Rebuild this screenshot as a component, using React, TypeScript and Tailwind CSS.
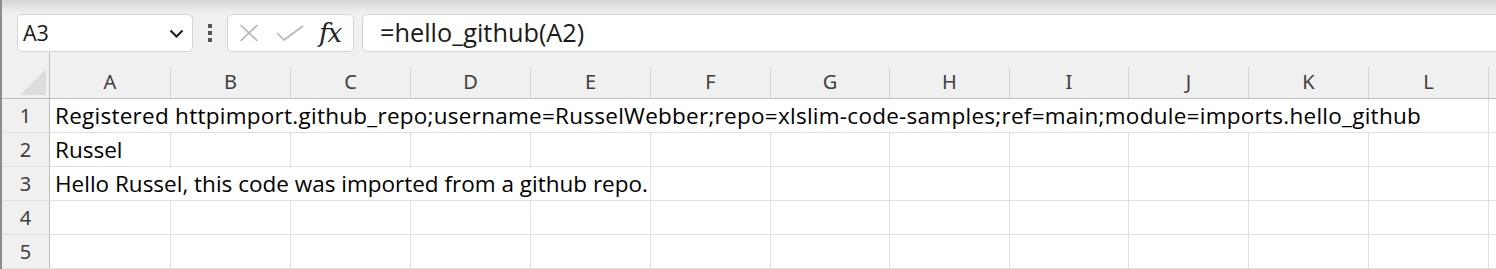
const COLS = [
  { name: "A", w: "w-[121px]" },
  { name: "B", w: "w-[120px]" },
  { name: "C", w: "w-[120px]" },
  { name: "D", w: "w-[120px]" },
  { name: "E", w: "w-[120px]" },
  { name: "F", w: "w-[120px]" },
  { name: "G", w: "w-[119px]" },
  { name: "H", w: "w-[120px]" },
  { name: "I", w: "w-[119px]" },
  { name: "J", w: "w-[120px]" },
  { name: "K", w: "w-[120px]" },
  { name: "L", w: "w-[120px]" },
];

const SPAN_W: Record<number, string> = {
  5: "w-[601px]",
  12: "w-[1439px]",
};

type Row = { n: number; text?: string; span?: number; track?: string };

const ROWS: Row[] = [
  {
    n: 1,
    text: "Registered httpimport.github_repo;username=RusselWebber;repo=xlslim-code-samples;ref=main;module=imports.hello_github",
    span: 12,
    track: "tracking-[0.26px]",
  },
  { n: 2, text: "Russel" },
  { n: 3, text: "Hello Russel, this code was imported from a github repo.", span: 5 },
  { n: 4 },
  { n: 5 },
];

const cellFont = "font-['Open_Sans','Noto_Sans',sans-serif] text-[22.5px] leading-none text-black";
const uiFont = "font-['Noto_Sans','Open_Sans',sans-serif] text-[20px] leading-none text-[#3e3e3e]";

function FormulaBar() {
  return (
    <div className="flex h-[40px] items-center pl-[15px]">
      <div className="flex h-[38px] w-[176px] items-center justify-between rounded-[5px] border border-[#d4d4d4] bg-white pl-[5px] pr-[8px]">
        <span className="font-['Open_Sans','Noto_Sans',sans-serif] text-[21.5px] leading-none text-[#1a1a1a]">
          A3
        </span>
        <svg width="15" height="9" viewBox="0 0 15 9">
          <path d="M1.5 1.5 7.5 7.5l6-6" fill="none" stroke="#222" strokeWidth="2.2" />
        </svg>
      </div>
      <div className="ml-[15px] mr-[15px] flex flex-col gap-[3px]">
        <span className="h-[4px] w-[4px] bg-[#555]" />
        <span className="h-[4px] w-[4px] bg-[#555]" />
        <span className="h-[4px] w-[4px] bg-[#555]" />
      </div>
      <div className="flex h-[38px] w-[127px] items-center rounded-[5px] border border-[#d4d4d4] bg-white pl-[10px]">
        <svg width="22" height="18" viewBox="0 0 22 18">
          <path d="M2.5 1l17 16M19.5 1l-17 16" stroke="#b4b4b4" strokeWidth="1.6" />
        </svg>
        <svg width="28" height="16" viewBox="0 0 28 16" className="ml-[16px]">
          <path d="M1 8l7 7L27 1" fill="none" stroke="#b4b4b4" strokeWidth="1.6" />
        </svg>
        <span className="ml-[15px] font-['DejaVu_Serif','Liberation_Serif',serif] text-[26px] italic leading-none tracking-[-1px] text-[#222]">
          fx
        </span>
      </div>
      <div className="ml-[8px] mr-[-20px] flex h-[38px] flex-1 items-center rounded-[5px] border border-[#d4d4d4] bg-white pl-[17px]">
        <span className="font-['Open_Sans','Noto_Sans',sans-serif] text-[25.3px] leading-none text-[#1a1a1a]">
          =hello_github(A2)
        </span>
      </div>
    </div>
  );
}

function HeaderRow() {
  return (
    <div className="flex h-[46px] border-b border-[#bdbdbd]">
      <div className="flex w-[48px] shrink-0 items-end justify-end border-r border-[#bdbdbd] pr-[3px] pb-[3px]">
        <svg width="26" height="26" viewBox="0 0 26 26">
          <path d="M26 0v26H0z" fill="#dcdcdc" />
        </svg>
      </div>
      {COLS.map((c) => (
        <div key={c.name} className={`${c.w} flex shrink-0`}>
          <div className={`${uiFont} flex flex-1 items-end justify-center pb-[6px]`}>{c.name}</div>
          <div className="h-[31px] w-px self-end bg-[#d6d6d6]" />
        </div>
      ))}
      <div className="flex-1" />
    </div>
  );
}

function GridRow({ row }: { row: Row }) {
  const span = row.text ? row.span ?? 1 : 0;
  const rest = COLS.slice(span);
  return (
    <div className="flex h-[34px] border-b border-[#e0e0e0] bg-white">
      <div
        className={`${uiFont} flex w-[48px] shrink-0 items-end justify-center border-r border-[#bdbdbd] bg-[#f0f0f0] pb-[6px]`}
      >
        {row.n}
      </div>
      {span > 0 && (
        <div
          className={`${span > 1 ? SPAN_W[span] : COLS[0].w} flex shrink-0 items-end whitespace-nowrap border-r border-[#e0e0e0] pl-[5px] pb-[5px] ${cellFont} ${row.track ?? ""}`}
        >
          {row.text}
        </div>
      )}
      {rest.map((c) => (
        <div key={c.name} className={`${c.w} shrink-0 border-r border-[#e0e0e0]`} />
      ))}
      <div className="flex-1" />
    </div>
  );
}

export default function App() {
  return (
    <div className="h-[269px] w-[1496px] overflow-hidden border-l-2 border-[#8c8c8c] bg-[#f0f0f0]">
      <div className="h-[13px] bg-gradient-to-b from-[#d6d6d6] to-[#f0f0f0]" />
      <FormulaBar />
      <HeaderRow />
      {ROWS.map((r) => (
        <GridRow key={r.n} row={r} />
      ))}
    </div>
  );
}
